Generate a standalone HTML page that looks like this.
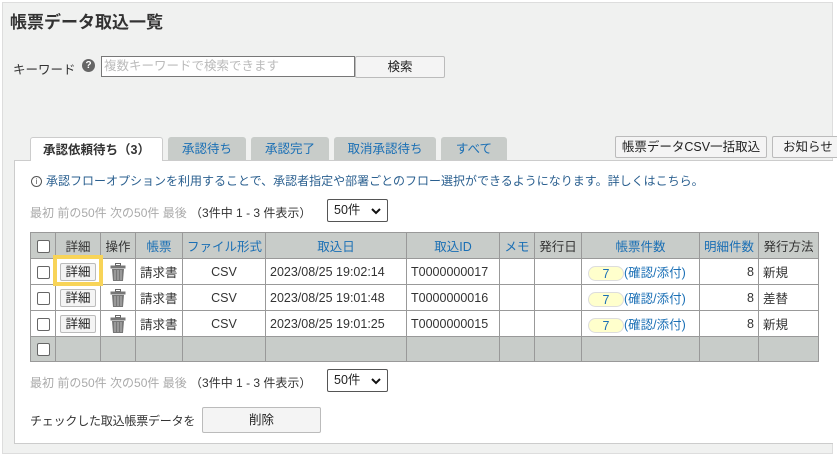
<!DOCTYPE html>
<html><head><meta charset="utf-8"><style>
*{box-sizing:border-box;margin:0;padding:0}
body{width:837px;height:458px;background:#fff;font-family:"Liberation Sans","Noto Sans CJK JP",sans-serif;font-size:12.5px;color:#333;position:relative;overflow:hidden}
.a{position:absolute}
#outer{left:2px;top:2px;width:831px;height:452px;background:#f0f1f0;border:1px solid #ddd}
h1{position:absolute;left:10px;top:8px;font-size:17px;font-weight:bold;color:#333}
.btn{position:absolute;background:#f4f4f4;border:1px solid #bbb;border-radius:2px;text-align:center;font-size:12.5px;color:#222}
.tab{position:absolute;top:137px;height:23px;background:#c8ccc9;border-radius:3px 3px 0 0;text-align:center;line-height:24px;color:#1a6fb5;font-size:12.5px}
#panel{left:14px;top:160px;width:819px;height:284px;background:#fff;border:1px solid #ccc;border-right:none}
table{position:absolute;left:30px;top:232px;width:788px;border-collapse:collapse;table-layout:fixed}
td,th{border:1px solid #999;height:26px;font-weight:normal;font-size:12.5px;padding:0 4px;white-space:nowrap;overflow:hidden}
th{background:#c8ccc9;color:#1a6fb5;text-align:center}
tr.f td{background:#c8ccc9;height:25px}
.cb{display:inline-block;width:13px;height:13px;border:1px solid #666;border-radius:2px;background:#fff;vertical-align:middle}
.dt{display:inline-block;border:1px solid #bbb;background:#f4f4f4;border-radius:2px;padding:0 4px;height:18px;line-height:17px;font-size:12.5px;color:#222}
.pill{display:inline-block;width:36px;height:15px;background:#ffffcc;border:1px solid #ddd;border-radius:8px;text-align:center;line-height:14px;color:#1a6fb5;vertical-align:middle;margin-left:2px}
.pg{position:absolute;left:30px;font-size:12px;color:#aaa}
.pg span{color:#333}
.sel{position:absolute;left:327px;width:61px;height:23px;border:1px solid #555;border-radius:2px;background:#fff;padding-left:6px;line-height:21px;color:#222}
.sel svg{position:absolute;right:6px;top:7px}
.tr{vertical-align:middle}
</style></head><body>
<div id="outer" class="a"></div>
<h1>帳票データ取込一覧</h1>
<div class="a" style="left:13px;top:59px;color:#333">キーワード</div>
<div class="a" style="left:82px;top:59px;width:13px;height:13px;border-radius:50%;background:#666;color:#fff;font-size:10px;font-weight:bold;text-align:center;line-height:13px">?</div>
<div class="a" style="left:101px;top:56px;width:254px;height:21px;background:#fff;border:1px solid #777;color:#bbb;padding-left:2px;line-height:19px">複数キーワードで検索できます</div>
<div class="btn" style="left:355px;top:56px;width:90px;height:22px;line-height:20px">検索</div>
<div id="panel" class="a"></div>
<div class="tab" style="left:30px;width:133px;height:24px;background:#fff;border:1px solid #ccc;border-bottom:none;color:#333;font-weight:bold">承認依頼待ち（3）</div>
<div class="tab" style="left:168px;width:78px">承認待ち</div>
<div class="tab" style="left:251px;width:78px">承認完了</div>
<div class="tab" style="left:334px;width:102px">取消承認待ち</div>
<div class="tab" style="left:441px;width:66px">すべて</div>
<div class="btn" style="left:615px;top:136px;width:152px;height:22px;line-height:20px">帳票データCSV一括取込</div>
<div class="btn" style="left:772px;top:136px;width:70px;height:22px;line-height:20px;text-align:left;padding-left:10px">お知らせ</div>
<div class="a" style="left:31px;top:172px;color:#2a5f8f;font-size:12px"><span style="display:inline-block;width:11px;height:11px;border:1px solid #555;border-radius:50%;font-size:8px;text-align:center;line-height:9px;color:#555;vertical-align:middle;margin-right:4px">i</span>承認フローオプションを利用することで、承認者指定や部署ごとのフロー選択ができるようになります。詳しくはこちら。</div>
<div class="pg" style="top:204px">最初 前の50件 次の50件 最後 <span>（3件中 1 - 3 件表示）</span></div>
<div class="sel" style="top:199px">50件<svg width="10" height="8" viewBox="0 0 10 8"><path d="M1 2l4 4 4-4" stroke="#111" stroke-width="2" fill="none"/></svg></div>
<table>
<colgroup><col width="25"><col width="45"><col width="35"><col width="47"><col width="83"><col width="141"><col width="93"><col width="35"><col width="47"><col width="118"><col width="59"><col width="60"></colgroup>
<tr><th><span class="cb"></span></th><th style="color:#333">詳細</th><th style="color:#333">操作</th><th>帳票</th><th>ファイル形式</th><th>取込日</th><th>取込ID</th><th>メモ</th><th style="color:#333">発行日</th><th>帳票件数</th><th>明細件数</th><th style="color:#333">発行方法</th></tr>
<tr><td style="text-align:center"><span class="cb"></span></td><td style="text-align:center"><span class="dt">詳細</span></td><td style="text-align:center"><svg class="tr" width="16" height="18" viewBox="0 0 16 18"><rect x="5.5" y="0.5" width="5" height="2" fill="none" stroke="#666"/><rect x="0.5" y="2.5" width="15" height="3" fill="#777"/><path d="M2 6h12l-1 12H3z" fill="#777"/><path d="M5 7v10M8 7v10M11 7v10" stroke="#bbb" stroke-width="1"/></svg></td><td>請求書</td><td style="text-align:center">CSV</td><td>2023/08/25 19:02:14</td><td>T0000000017</td><td></td><td></td><td><span class="pill">7</span><span style="color:#1a6fb5">(確認/添付)</span></td><td style="text-align:right">8</td><td>新規</td></tr>
<tr><td style="text-align:center"><span class="cb"></span></td><td style="text-align:center"><span class="dt">詳細</span></td><td style="text-align:center"><svg class="tr" width="16" height="18" viewBox="0 0 16 18"><rect x="5.5" y="0.5" width="5" height="2" fill="none" stroke="#666"/><rect x="0.5" y="2.5" width="15" height="3" fill="#777"/><path d="M2 6h12l-1 12H3z" fill="#777"/><path d="M5 7v10M8 7v10M11 7v10" stroke="#bbb" stroke-width="1"/></svg></td><td>請求書</td><td style="text-align:center">CSV</td><td>2023/08/25 19:01:48</td><td>T0000000016</td><td></td><td></td><td><span class="pill">7</span><span style="color:#1a6fb5">(確認/添付)</span></td><td style="text-align:right">8</td><td>差替</td></tr>
<tr><td style="text-align:center"><span class="cb"></span></td><td style="text-align:center"><span class="dt">詳細</span></td><td style="text-align:center"><svg class="tr" width="16" height="18" viewBox="0 0 16 18"><rect x="5.5" y="0.5" width="5" height="2" fill="none" stroke="#666"/><rect x="0.5" y="2.5" width="15" height="3" fill="#777"/><path d="M2 6h12l-1 12H3z" fill="#777"/><path d="M5 7v10M8 7v10M11 7v10" stroke="#bbb" stroke-width="1"/></svg></td><td>請求書</td><td style="text-align:center">CSV</td><td>2023/08/25 19:01:25</td><td>T0000000015</td><td></td><td></td><td><span class="pill">7</span><span style="color:#1a6fb5">(確認/添付)</span></td><td style="text-align:right">8</td><td>新規</td></tr>
<tr class="f"><td style="text-align:center"><span class="cb"></span></td><td></td><td></td><td></td><td></td><td></td><td></td><td></td><td></td><td></td><td></td><td></td></tr>
</table>
<div class="a" style="left:53px;top:255px;width:50px;height:31px;border:4px solid #f8d458"></div>
<div class="pg" style="top:374px">最初 前の50件 次の50件 最後 <span>（3件中 1 - 3 件表示）</span></div>
<div class="sel" style="top:369px">50件<svg width="10" height="8" viewBox="0 0 10 8"><path d="M1 2l4 4 4-4" stroke="#111" stroke-width="2" fill="none"/></svg></div>
<div class="a" style="left:30px;top:412px;color:#333;font-size:12px;letter-spacing:-0.2px">チェックした取込帳票データを</div>
<div class="btn" style="left:202px;top:407px;width:119px;height:26px;line-height:24px">削除</div>
</body></html>
